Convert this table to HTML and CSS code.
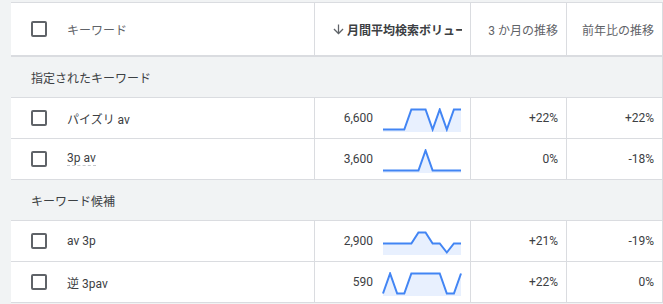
FILE: index.html
```html
<!DOCTYPE html>
<html lang="ja">
<head>
<meta charset="utf-8">
<title>キーワード</title>
<link rel="stylesheet" href="styles.css">
</head>
<body>
<div class="page">
  <div class="table">
    <div class="row head">
      <div class="cell kw"><span class="cb"></span><span class="htext">キーワード</span></div>
      <div class="cell vol-head">
        <svg class="arrow" viewBox="0 0 24 24" width="15" height="15"><path d="M20 12l-1.41-1.41L13 16.17V4h-2v12.17l-5.58-5.59L4 12l8 8 8-8z" fill="#5f6368"/></svg>
        <span class="hbold">月間平均検索ボリューム</span>
      </div>
      <div class="cell num htext">3 か月の推移</div>
      <div class="cell num htext last">前年比の推移</div>
    </div>

    <div class="section">指定されたキーワード</div>

    <div class="row">
      <div class="cell kw"><span class="cb"></span><span>パイズリ av</span></div>
      <div class="cell vol">
        <span>6,600</span>
        <svg class="spark" viewBox="0 0 80 24" width="80" height="24">
          <path class="area" d="M1,21.5 L8.09,21.5 L15.18,21.5 L22.27,21.5 L29.36,1.5 L36.45,1.5 L43.55,1.5 L50.64,21.5 L57.73,1.5 L64.82,21.5 L71.91,1.5 L79,1.5 L79,24 L1,24 Z"/>
          <polyline class="line" points="1,21.5 8.09,21.5 15.18,21.5 22.27,21.5 29.36,1.5 36.45,1.5 43.55,1.5 50.64,21.5 57.73,1.5 64.82,21.5 71.91,1.5 79,1.5"/>
        </svg>
      </div>
      <div class="cell num">+22%</div>
      <div class="cell num last">+22%</div>
    </div>

    <div class="row">
      <div class="cell kw"><span class="cb"></span><span class="dotted">3p av</span></div>
      <div class="cell vol">
        <span>3,600</span>
        <svg class="spark" viewBox="0 0 80 24" width="80" height="24">
          <path class="area" d="M1,21.5 L8.09,21.5 L15.18,21.5 L22.27,21.5 L29.36,21.5 L36.45,21.5 L43.55,1.5 L50.64,21.5 L57.73,21.5 L64.82,21.5 L71.91,21.5 L79,21.5 L79,24 L1,24 Z"/>
          <polyline class="line" points="1,21.5 8.09,21.5 15.18,21.5 22.27,21.5 29.36,21.5 36.45,21.5 43.55,1.5 50.64,21.5 57.73,21.5 64.82,21.5 71.91,21.5 79,21.5"/>
        </svg>
      </div>
      <div class="cell num">0%</div>
      <div class="cell num last">-18%</div>
    </div>

    <div class="section">キーワード候補</div>

    <div class="row">
      <div class="cell kw"><span class="cb"></span><span>av 3p</span></div>
      <div class="cell vol">
        <span>2,900</span>
        <svg class="spark" viewBox="0 0 80 24" width="80" height="24">
          <path class="area" d="M1,12.5 L8.09,12.5 L15.18,12.5 L22.27,12.5 L29.36,12.5 L36.45,1.5 L43.55,1.5 L50.64,12.5 L57.73,12.5 L64.82,21.5 L71.91,12.5 L79,12.5 L79,24 L1,24 Z"/>
          <polyline class="line" points="1,12.5 8.09,12.5 15.18,12.5 22.27,12.5 29.36,12.5 36.45,1.5 43.55,1.5 50.64,12.5 57.73,12.5 64.82,21.5 71.91,12.5 79,12.5"/>
        </svg>
      </div>
      <div class="cell num">+21%</div>
      <div class="cell num last">-19%</div>
    </div>

    <div class="row">
      <div class="cell kw"><span class="cb"></span><span>逆 3pav</span></div>
      <div class="cell vol">
        <span>590</span>
        <svg class="spark" viewBox="0 0 80 24" width="80" height="24">
          <path class="area" d="M1,21.5 L8.09,1.5 L15.18,21.5 L22.27,21.5 L29.36,1.5 L36.45,1.5 L43.55,1.5 L50.64,1.5 L57.73,1.5 L64.82,21.5 L71.91,21.5 L79,1.5 L79,24 L1,24 Z"/>
          <polyline class="line" points="1,21.5 8.09,1.5 15.18,21.5 22.27,21.5 29.36,1.5 36.45,1.5 43.55,1.5 50.64,1.5 57.73,1.5 64.82,21.5 71.91,21.5 79,1.5"/>
        </svg>
      </div>
      <div class="cell num">+22%</div>
      <div class="cell num last">0%</div>
    </div>
  </div>
</div>
</body>
</html>
```

FILE: styles.css
```css
html, body {
  margin: 0;
  padding: 0;
  background: #f1f3f4;
}

body {
  font-family: Roboto, "Noto Sans CJK JP", sans-serif;
  font-size: 12px;
  color: #3c4043;
}

.page {
  padding: 2px 0 0 11px;
}

.table {
  width: 652px;
  box-sizing: border-box;
  background: #fff;
  border-top: 1px solid #dadce0;
  border-right: 1px solid #dadce0;
}

.row {
  display: grid;
  grid-template-columns: 304px 156px 96px 95px;
  height: 41px;
  box-sizing: border-box;
  border-bottom: 1px solid #dadce0;
}

.row.head {
  height: 54px;
  border-bottom: 2px solid #dadce0;
}

.cell {
  display: flex;
  align-items: center;
  box-sizing: border-box;
  border-right: 1px solid #dadce0;
  min-width: 0;
  white-space: nowrap;
}

.cell.last {
  border-right: none;
}

.kw {
  padding-left: 20px;
  gap: 20px;
}

.cb {
  width: 16px;
  height: 16px;
  box-sizing: border-box;
  border: 2px solid #5f6368;
  border-radius: 2px;
  flex: none;
}

.htext {
  color: #5f6368;
}

.vol-head {
  padding: 0 8px 0 16px;
  gap: 1px;
  overflow: hidden;
}

.arrow {
  flex: none;
  margin-top: 1px;
}

.hbold {
  font-weight: bold;
  color: #3c4043;
  overflow: hidden;
}

.vol {
  justify-content: flex-end;
  padding-right: 8px;
  gap: 9px;
}

.spark {
  display: block;
  flex: none;
  margin-top: 3px;
}

.spark .area {
  fill: #e8f0fe;
}

.spark .line {
  fill: none;
  stroke: #4285f4;
  stroke-width: 2;
}

.num {
  justify-content: flex-end;
  padding-right: 8px;
}

.section {
  height: 41px;
  box-sizing: border-box;
  background: #f1f3f4;
  border-bottom: 1px solid #dadce0;
  padding-left: 20px;
  display: flex;
  align-items: center;
  color: #3c4043;
}

.dotted {
  border-bottom: 1px dashed #c4c7cb;
  line-height: 13px;
}
```
